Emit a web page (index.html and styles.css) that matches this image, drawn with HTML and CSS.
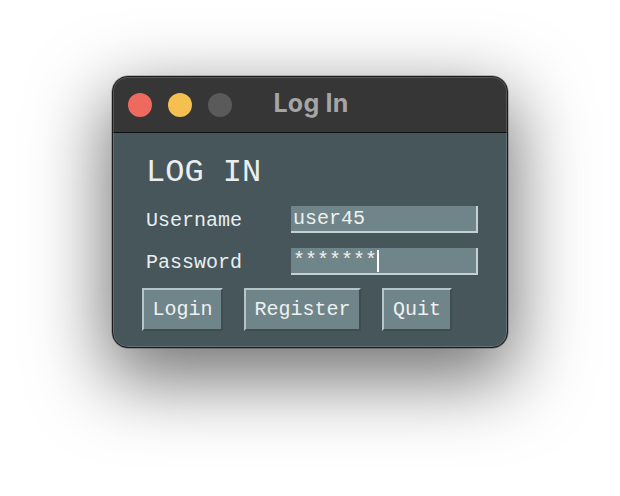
FILE: index.html
```html
<!DOCTYPE html>
<html lang="en">
<head>
<meta charset="utf-8">
<title>Log In</title>
<link rel="stylesheet" href="styles.css">
</head>
<body>
<div class="stage">
  <div class="window">
    <div class="titlebar">
      <div class="lights">
        <span class="light light-close"></span>
        <span class="light light-min"></span>
        <span class="light light-max"></span>
      </div>
      <div class="title">Log In</div>
      <div></div>
    </div>
    <div class="content">
      <div class="heading">LOG IN</div>
      <div class="form">
        <label class="label">Username</label>
        <div class="entry">user45</div>
        <label class="label">Password</label>
        <div class="entry">*******<span class="caret"></span></div>
      </div>
      <div class="buttons">
        <div class="btn btn-login">Login</div>
        <div class="btn btn-register">Register</div>
        <div class="btn btn-quit">Quit</div>
      </div>
    </div>
  </div>
</div>
</body>
</html>
```

FILE: styles.css
```css
* { box-sizing: border-box; }

html, body {
  margin: 0;
  padding: 0;
  background: #ffffff;
}

.stage {
  width: 620px;
  height: 496px;
  padding-top: 76px;
  overflow: hidden;
}

.window {
  width: 396px;
  height: 272px;
  margin: 0 auto;
  border: 1px solid #1a1a1a;
  border-radius: 16px;
  overflow: hidden;
  background: #47565b;
  box-shadow: 0 26px 75px 6px rgba(0, 0, 0, 0.55), 0 0 0 0.5px rgba(0,0,0,0.4);
  position: relative;
}

.window::after {
  content: "";
  position: absolute;
  inset: 0;
  border-radius: 15px;
  box-shadow: inset 0 0 0 1px rgba(255, 255, 255, 0.16);
  pointer-events: none;
}

.titlebar {
  height: 56px;
  background: #363636;
  border-bottom: 1px solid #101010;
  display: grid;
  grid-template-columns: 1fr auto 1fr;
  align-items: center;
  padding-bottom: 3px;
}

.lights {
  display: flex;
  gap: 16px;
  padding-left: 15px;
  padding-top: 3px;
}

.light {
  width: 24px;
  height: 24px;
  border-radius: 50%;
  display: block;
}
.light-close { background: #ee6a5f; }
.light-min { background: #f5c04f; }
.light-max { background: #5a5a5a; }

.title {
  font-family: Inter, "Liberation Sans", sans-serif;
  font-weight: 700;
  font-size: 25px;
  color: #a5a5a5;
  letter-spacing: 0.2px;
  padding-left: 2px;
}

.content {
  padding: 20px 0 0 29px;
  font-family: "Liberation Mono", "DejaVu Sans Mono", monospace;
  color: #eef2f2;
}

.heading {
  font-size: 32px;
  line-height: 40px;
  padding-left: 4px;
  color: #eaeeee;
}

.form {
  margin-top: 13px;
  margin-left: 4px;
  display: grid;
  grid-template-columns: 145px 187px;
  grid-auto-rows: 27px;
  row-gap: 15px;
  align-items: center;
}

.label {
  font-size: 20px;
  line-height: 27px;
  padding-top: 2px;
  color: #eaeeee;
}

.entry {
  height: 27px;
  background: #708589;
  border-right: 2px solid #c3d1d4;
  border-bottom: 2px solid #c3d1d4;
  font-size: 20px;
  line-height: 25px;
  padding-left: 2px;
  color: #eef1f1;
  white-space: nowrap;
  display: flex;
  align-items: flex-start;
}

.caret {
  display: inline-block;
  width: 2px;
  height: 22px;
  margin-top: 2px;
  background: #ffffff;
}

.buttons {
  margin-top: 13px;
  display: flex;
  gap: 21px;
}

.btn {
  height: 43px;
  background: #708589;
  border-top: 2px solid #b4c4c8;
  border-left: 2px solid #b4c4c8;
  border-right: 2px solid #3f4d51;
  border-bottom: 2px solid #3f4d51;
  font-size: 20px;
  line-height: 39px;
  text-align: center;
  color: #eef1f1;
}
.btn-login { width: 81px; }
.btn-register { width: 117px; }
.btn-quit { width: 70px; }
```
